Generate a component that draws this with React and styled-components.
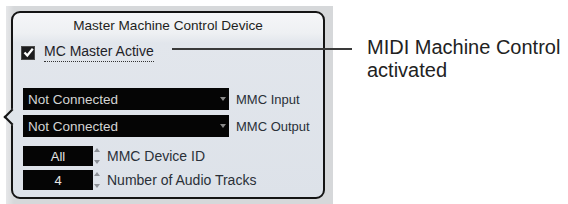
import React from "react";
import styled, { createGlobalStyle } from "styled-components";

const GlobalStyle = createGlobalStyle`
  body {
    margin: 0;
    background: #fff;
    font-family: "Liberation Sans", Arial, sans-serif;
  }
`;

const Page = styled.div`
  position: relative;
  display: flex;
  align-items: flex-start;
  width: 568px;
  height: 204px;
  overflow: hidden;
`;

const Frame = styled.div`
  margin: 6px 0 0 6px;
  padding: 5px 8px 6px 5px;
  background: linear-gradient(90deg, #e6e7e9 0, #d6d8da 8px, #d6d8da 100%);
`;

const Panel = styled.div`
  position: relative;
  width: 310px;
  height: 184px;
  border: 2px solid #141414;
  border-radius: 9px;
  background: linear-gradient(
    180deg,
    #f5f6f8 0,
    #eef0f3 20px,
    #e2e6ec 30px,
    #dde2e9 100%
  );

  &::before {
    content: "";
    position: absolute;
    left: -7px;
    top: 98px;
    width: 10px;
    height: 10px;
    background: #dfe4ea;
    border-left: 2px solid #141414;
    border-bottom: 2px solid #141414;
    transform: rotate(45deg);
  }
`;

const Title = styled.div`
  height: 24px;
  display: flex;
  align-items: center;
  justify-content: center;
  font-size: 13.6px;
  color: #1e1f22;
`;

const CheckRow = styled.div`
  display: flex;
  align-items: center;
  gap: 9px;
  margin: 6px 0 0 8px;
`;

const Box = styled.div`
  width: 14px;
  height: 14px;
  box-sizing: border-box;
  background: #1c1c1e;
  border: 1px solid #4a4a4a;
  display: flex;
  align-items: center;
  justify-content: center;
`;

const CheckLabel = styled.span`
  font-size: 14px;
  color: #1e2228;
  padding-bottom: 2px;
  border-bottom: 1px dotted #333;
`;

const Rows = styled.div`
  display: flex;
  flex-direction: column;
  gap: ${(p) => p.$gap}px;
  margin: ${(p) => p.$top}px 0 0 10px;
`;

const Row = styled.div`
  display: flex;
  align-items: center;
`;

const Select = styled.div`
  position: relative;
  width: 206px;
  height: 22px;
  background: #050505;
  color: #d4d4d4;
  font-size: 13.5px;
  display: flex;
  align-items: center;
  padding-left: 5px;
  box-sizing: border-box;

  &::after {
    content: "";
    position: absolute;
    right: 3px;
    top: 9px;
    border-left: 3px solid transparent;
    border-right: 3px solid transparent;
    border-top: 4px solid #8a8a8a;
  }
`;

const Label = styled.span`
  margin-left: ${(p) => p.$gap}px;
  font-size: ${(p) => p.$size}px;
  color: #2a3038;
`;

const Field = styled.div`
  width: 70px;
  height: 20px;
  background: #050505;
  color: #e6e6e6;
  font-size: 13px;
  display: flex;
  align-items: center;
  justify-content: center;
`;

const Spin = styled.div`
  width: 8px;
  height: 20px;
  display: flex;
  flex-direction: column;
  align-items: center;
  justify-content: space-between;
  padding: 2px 0;
  box-sizing: border-box;

  span {
    width: 0;
    height: 0;
    border-left: 3px solid transparent;
    border-right: 3px solid transparent;
  }
  span:first-child {
    border-bottom: 4px solid #8c9096;
  }
  span:last-child {
    border-top: 4px solid #8c9096;
  }
`;

const Leader = styled.div`
  position: absolute;
  left: 172px;
  top: 48px;
  width: 180px;
  height: 2px;
  background: #3a3a3a;
`;

const Callout = styled.div`
  margin: 36px 0 0 34px;
  font-size: 20px;
  line-height: 23px;
  color: #222;
  white-space: nowrap;
`;

const Check = () => (
  <svg width="11" height="11" viewBox="0 0 11 11">
    <path d="M1.5 5.5 L4.3 8.5 L9.8 1.8" fill="none" stroke="#fff" strokeWidth="2.3" />
  </svg>
);

const Spinner = ({ value, label }) => (
  <Row>
    <Field>{value}</Field>
    <Spin>
      <span />
      <span />
    </Spin>
    <Label $gap={6} $size={14}>
      {label}
    </Label>
  </Row>
);

export default function App() {
  return (
    <>
      <GlobalStyle />
      <Page>
        <Frame>
          <Panel>
            <Title>Master Machine Control Device</Title>
            <CheckRow>
              <Box>
                <Check />
              </Box>
              <CheckLabel>MC Master Active</CheckLabel>
            </CheckRow>
            <Rows $top={26} $gap={5}>
              <Row>
                <Select>Not Connected</Select>
                <Label $gap={7} $size={13}>
                  MMC Input
                </Label>
              </Row>
              <Row>
                <Select>Not Connected</Select>
                <Label $gap={7} $size={13}>
                  MMC Output
                </Label>
              </Row>
            </Rows>
            <Rows $top={9} $gap={4}>
              <Spinner value="All" label="MMC Device ID" />
              <Spinner value="4" label="Number of Audio Tracks" />
            </Rows>
          </Panel>
        </Frame>
        <Leader />
        <Callout>
          MIDI Machine Control
          <br />
          activated
        </Callout>
      </Page>
    </>
  );
}
